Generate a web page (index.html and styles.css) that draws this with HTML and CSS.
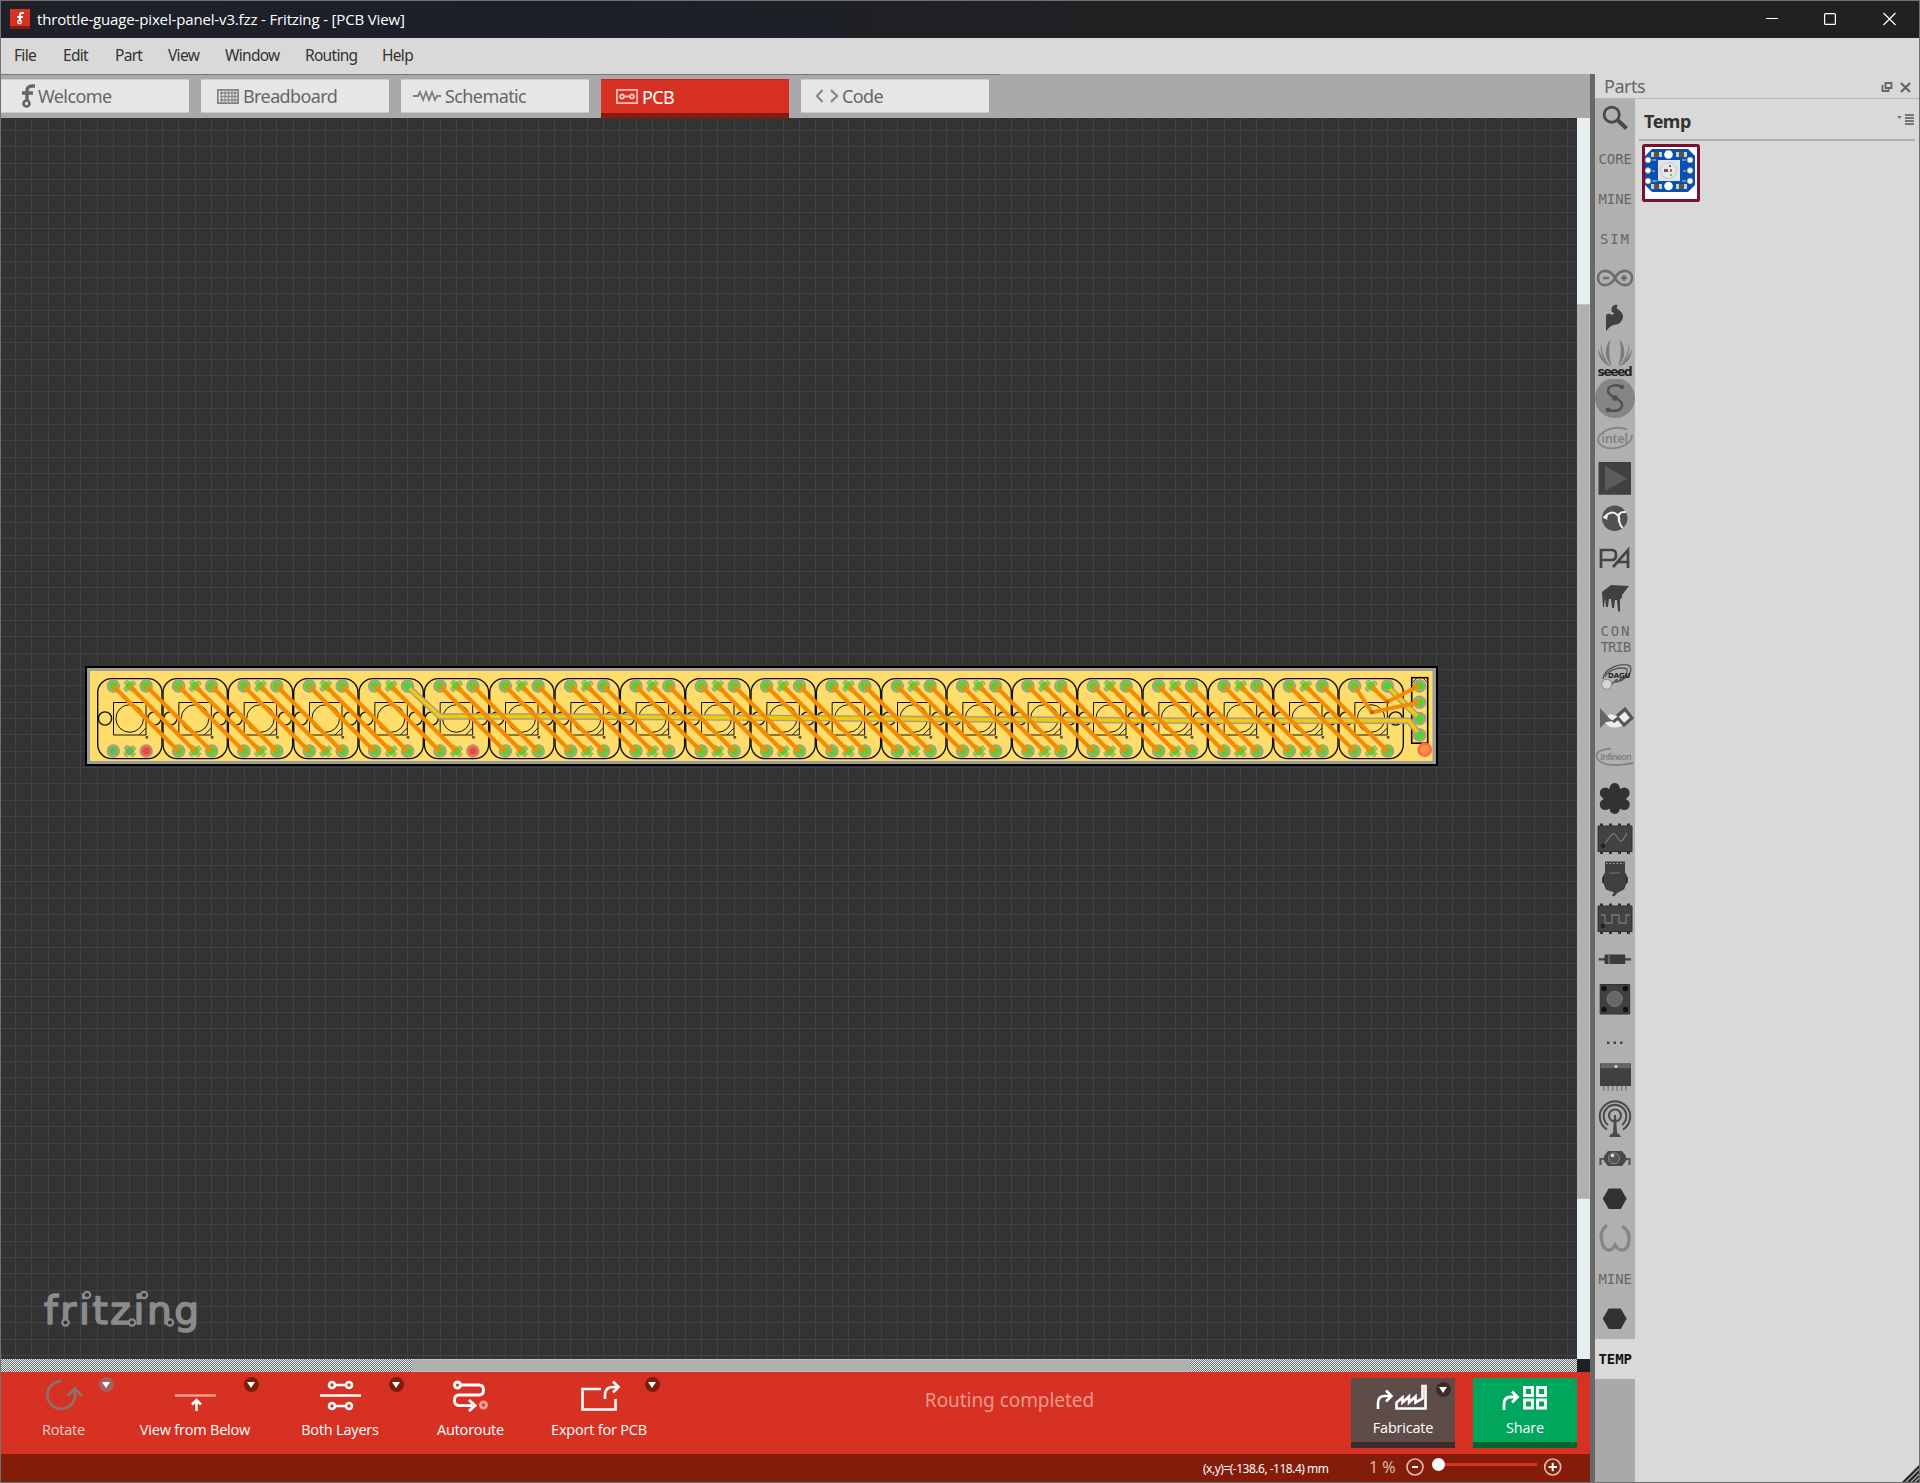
FILE: index.html
```html
<!DOCTYPE html>
<html lang="en">
<head>
<meta charset="utf-8">
<title>throttle-guage-pixel-panel-v3.fzz - Fritzing - [PCB View]</title>
<link rel="stylesheet" href="styles.css">
</head>
<body>
<div class="window">
  <header class="titlebar">
    <svg class="app-icon" width="20" height="20" viewBox="0 0 20 20"><path fill="#d63122" d="M0 0h20v17H0z"/><path fill="#861c0b" d="M0 17h20v3H0z"/><g fill="none" stroke="#fff" stroke-width="2"><path d="M14 4h-2q-2 0-2 2v5M7 8h6"/><circle cx="9.5" cy="13" r="1.7" stroke-width="1.5"/></g></svg>
    <span class="title">throttle-guage-pixel-panel-v3.fzz - Fritzing - [PCB View]</span>
    <svg class="controls" width="132" height="14" viewBox="0 0 132 14" fill="none" stroke="#fff" stroke-width="1.2"><path d="M0 6.5h12M117.500 1l12 12m0-12l-12 12"/><rect x="58.600" y="1.600" width="10.800" height="10.800" rx="1"/></svg>
  </header>
  <nav class="menubar"><span class="m1">File</span><span class="m2">Edit</span><span class="m3">Part</span><span class="m4">View</span><span class="m5">Window</span><span class="m6">Routing</span><span class="m7">Help</span></nav>
  <div class="body">
    <main class="editor">
      <div class="tabs">
        <div class="tab"><svg width="17" height="26" viewBox="0 0 17 26" fill="none" stroke="#666" stroke-width="3.400"><path d="M15 3h-3q-5 0-5 5v9M2 10h11"/><circle cx="6.500" cy="20.500" r="3" stroke-width="2.700"/></svg><span>Welcome</span></div>
        <div class="tab tab-board"><svg width="22" height="15" viewBox="0 0 22 15" fill="none"><path stroke="#808080" stroke-width="1.800" d="M.8.8h20.400v13.400H.8z"/><path stroke="#8a8a8a" stroke-width="1.300" d="M3 4h17M3 7.500h17M3 11h17M4.500 2v11M8 2v11M11.500 2v11M15 2v11M18 2v11"/></svg><span>Breadboard</span></div>
        <div class="tab tab-schem"><svg width="28" height="12" viewBox="0 0 28 12" fill="none" stroke="#808080" stroke-width="1.800"><path d="M0 6h5l2-4 3 8 3-8 3 8 3-8 3 8 2-4h4"/></svg><span>Schematic</span></div>
        <div class="tab tab-pcb"><svg width="22" height="15" viewBox="0 0 22 15" fill="none" stroke="#f8c0ba" stroke-width="1.800"><path d="M.9.9h20.200v13.200H.9zM8 7.500h6"/><circle cx="6" cy="7.500" r="2"/><circle cx="16" cy="7.500" r="2"/></svg><span>PCB</span></div>
        <div class="tab tab-code"><svg width="24" height="14" viewBox="0 0 24 14" fill="none" stroke="#888" stroke-width="2.300"><path d="M7.500 1L2 7l5.500 6M16 1l6 6-6 6"/></svg><span>Code</span></div>
      </div>
      <div class="view">
        <div class="canvas">
          <svg class="board" width="1353" height="100" viewBox="85 666 1353 100">
            <defs>
              <g id="pad"><circle r="5.900" fill="#d0a955" stroke="#9f9b91" stroke-width="1.700"/><circle r="4.800" fill="#8cc43a"/><circle r="3.800" fill="#44d63c"/></g>
              <g id="padmid"><circle r="6" fill="none" stroke="#9f9b91" stroke-width="1.500" stroke-dasharray="5.400 4.025" stroke-dashoffset="-2"/><circle r="5" fill="#a7c244"/><circle r="3.800" fill="#44d63c"/></g>
              <g id="module" fill="none" stroke="#111" stroke-width="1">
                <rect x="97.700" y="678.600" width="64.300" height="80" rx="14" stroke-width="1.400"/>
                <circle cx="105" cy="718.500" r="6.600" stroke-width="1.400"/><circle cx="154.300" cy="718.500" r="6.600" stroke-width="1.400"/>
                <path d="M113.500 702.500h32.500v32.500h-32.500zM139 735l7-7"/><circle cx="129.700" cy="718.500" r="13.800"/><circle cx="146.800" cy="737.300" r="1"/>
              </g>
              <g id="pads" stroke="none"><use href="#pad" x="113.300" y="686"/><use href="#padmid" x="129.700" y="686"/><use href="#pad" x="146.200" y="686"/><use href="#pad" x="113.300" y="751"/><use href="#padmid" x="129.700" y="751"/><use href="#pad" x="146.200" y="751"/></g>
              <path id="tracks" d="M114.500 687.200l63 63M131 687.200l63 63M147.400 687.200l63 63" stroke="#f38c02" stroke-width="4.200" stroke-linecap="round"/>
              <path id="tracks2" d="M114.500 687.200l63 63M131 687.200l63 63" stroke="#f38c02" stroke-width="4.200" stroke-linecap="round"/>
              <g id="m5"><use href="#module"/><use href="#module" x="65.330"/><use href="#module" x="130.670"/><use href="#module" x="196"/><use href="#module" x="261.330"/></g>
              <g id="p5"><use href="#pads"/><use href="#pads" x="65.330"/><use href="#pads" x="130.670"/><use href="#pads" x="196"/><use href="#pads" x="261.330"/></g>
              <g id="t4"><use href="#tracks"/><use href="#tracks" x="65.330"/><use href="#tracks" x="130.670"/><use href="#tracks" x="196"/></g>
            </defs>
            <path d="M85 666h1353v100H85z"/><path fill="#9c9c9c" d="M87 668h1349v96H87z"/><path fill="#fedd6b" d="M90 671h1342.500v90H90z"/>
            <use href="#m5"/><use href="#m5" x="326.670"/><use href="#m5" x="653.330"/><use href="#m5" x="980"/>
            <rect x="1411.700" y="677.700" width="16" height="65.500" fill="none" stroke="#000" stroke-width="1.600"/><path d="M1412 683l5-5m6 0l5 5" stroke="#333"/>
            <use href="#p5"/><use href="#p5" x="326.670"/><use href="#p5" x="653.330"/><use href="#p5" x="980"/>
            <use href="#pad" x="1419.500" y="686"/><use href="#pad" x="1419.500" y="702.300"/><use href="#pad" x="1419.500" y="718.600"/><use href="#pad" x="1419.500" y="735"/>
            <g fill="#62b85a"><circle cx="113.300" cy="751" r="4"/><circle cx="129.700" cy="751" r="4"/></g>
            <g fill="none" stroke-linejoin="round"><path d="M407 686l33 30.500h120l400 2.700 240 1.500h209l10.500 14.300M1387 686l32.500 32.600" stroke="#9f9d91" stroke-width="6.400"/><path d="M407 686l33 30.500h120l400 2.700 240 1.500h209l10.500 14.300M1387 686l32.500 32.600" stroke="#f5c905" stroke-width="3.600"/></g>
            <g fill="#44d63c"><circle cx="407" cy="686" r="3.500"/><circle cx="1387.500" cy="686" r="3.500"/><circle cx="1419.500" cy="718.600" r="3.500"/><circle cx="1419.500" cy="735" r="3.500"/></g>
            <use href="#t4"/><use href="#tracks2" x="261.330"/><use href="#t4" x="326.670"/><use href="#t4" x="588"/><use href="#t4" x="849.330"/><use href="#tracks" x="1110.670"/><use href="#tracks" x="1176"/>
            <path d="M1354.300 686l17.700 26.300 47.500-10M1371 686l16.400 15.800 32-16" fill="none" stroke="#f38c02" stroke-width="4" stroke-linejoin="round"/>
            <g fill="#c05a28"><circle cx="1372" cy="712.300" r="2"/><circle cx="1387.400" cy="702" r="2"/></g>
            <g fill="#df4c49" stroke="#ff6940" stroke-width="1.800"><circle cx="146.200" cy="751" r="4.500"/><circle cx="473" cy="751" r="4.500"/><circle cx="1424.700" cy="749.700" r="6" fill="#ff9248" stroke-width="2.500"/></g>
          </svg>
          <svg class="logo" width="160" height="50" viewBox="0 0 160 50" fill="#8b8b8b"><text x="1" y="37" font-size="39" textLength="155" lengthAdjust="spacing" stroke="#8b8b8b" stroke-width="1.600" stroke-linejoin="round">fritzing</text><g fill="#333" stroke="#8b8b8b" stroke-width="2.200"><circle cx="44" cy="8" r="3.200"/><circle cx="101" cy="8" r="3.200"/><circle cx="22.500" cy="35.500" r="3.200"/><circle cx="89" cy="35.500" r="3.200"/><circle cx="127" cy="35.500" r="3.200"/></g></svg>
        </div>
        <div class="vscroll"><div class="vthumb"></div></div>
      </div>
      <div class="hscroll"><div class="hthumb"></div><div class="corner"></div></div>
      <div class="toolbar">
        <div class="tool t-rotate"><svg width="44" height="34" viewBox="0 0 44 34" fill="none" stroke="#8d716e" stroke-width="2.700"><path d="M19.500 3.200a13.800 13.800 0 1 0 13.500 13.800V11M25.500 18l7.500-7.500 7 7.500"/></svg><span>Rotate</span><i class="drop dim"></i></div>
        <div class="tool t-below"><svg width="44" height="34" viewBox="0 0 44 34" fill="none" stroke="#fff" stroke-width="2.500"><path stroke="#f1a18e" d="M2 17.500h41"/><path d="M23.500 33V22M19 26.500l4.500-4.500 4.500 4.500"/></svg><span>View from Below</span><i class="drop"></i></div>
        <div class="tool t-layers"><svg width="44" height="34" viewBox="0 0 44 34" fill="none" stroke="#fff" stroke-width="2.600"><path d="M2 17.500h41M17 7h11M17 28h11"/><circle cx="14" cy="7" r="3"/><circle cx="31" cy="7" r="3"/><circle cx="14" cy="28" r="3"/><circle cx="31" cy="28" r="3"/></svg><span>Both Layers</span><i class="drop"></i></div>
        <div class="tool t-auto"><svg width="44" height="34" viewBox="0 0 44 34" fill="none" stroke="#fff" stroke-width="2.900"><circle cx="8.500" cy="7" r="3"/><path d="M12 7h18q4.500 0 4.500 5t-4.500 5H10q-4.500 0-4.500 5.300t4.500 5.300h13M20 22l6 5.600-6 5.400"/><circle cx="34.500" cy="27" r="3" stroke="#f1a18e"/></svg><span>Autoroute</span></div>
        <div class="tool t-export"><svg width="44" height="34" viewBox="0 0 44 34" fill="none" stroke="#fff" stroke-width="2.600"><path d="M24 11H5.500v20.500h33V21M28 21v-4q0-8 8-8h5M36 3.500L41.500 9 36 14.500"/></svg><span>Export for PCB</span><i class="drop"></i></div>
        <div class="message">Routing completed</div>
        <div class="action fabricate"><svg width="54" height="27" viewBox="0 0 54 27" fill="none" stroke="#fff" stroke-width="2.600"><path d="M2 25v-6q0-7 7-7h6M10 6.500l5.500 5.500-5.500 5.500M20.500 24.500v-6l6-5v5l6.500-6v6l6.500-6v6l7-4V2h3v22.500z"/></svg><span>Fabricate</span><i class="drop dark"></i></div>
        <div class="action share"><svg width="46" height="27" viewBox="0 0 46 27" fill="none" stroke="#fff" stroke-width="2.800"><path d="M2 26v-6q0-7 7-7h6M10 7.500l5.500 5.500-5.500 5.500M22.500 3.500h8v8h-8zM35.500 3.500h8v8h-8zM22.500 16h8v8h-8zM35.500 16h8v8h-8z"/></svg><span>Share</span></div>
      </div>
      <div class="status"><span class="coords">(x,y)=(-138.6, -118.4) mm</span><span class="zoom">1 %</span>
        <svg class="slider" width="160" height="20" viewBox="0 0 160 20" fill="none" stroke="#e0b5aa" stroke-width="1.700"><circle cx="10" cy="11" r="8"/><circle cx="147.700" cy="11" r="8"/><path stroke="#fff" stroke-width="2" d="M7 11h6M143.500 11h8.400M147.700 6.800v8.400"/><path stroke="#d73222" stroke-width="3" d="M33 8.500h99"/><circle cx="33.500" cy="8.500" r="6.500" fill="#fff" stroke="none"/></svg>
      </div>
    </main>
    <div class="splitter"></div>
    <aside class="parts">
      <div class="parts-head"><span>Parts</span><svg width="32" height="14" viewBox="0 0 32 14" fill="none" stroke="#666" stroke-width="2.300"><path d="M4.500 2h6v5h-6zM2.500 5H1.500v5h6V8" stroke-width="1.800"/><path d="M20 2l9 9m0-9l-9 9"/></svg></div>
      <div class="parts-body">
        <div class="bins">
          <svg viewBox="0 0 40 40"><g fill="none" stroke="#484848"><circle cx="16.700" cy="15.700" r="7.600" stroke-width="2.700"/><path d="M23 21.500l8.500 8" stroke-width="4"/></g></svg>
          <svg viewBox="0 0 40 40"><text x="3.500" y="25">CORE</text></svg>
          <svg viewBox="0 0 40 40"><text x="3.500" y="25">MINE</text></svg>
          <svg viewBox="0 0 40 40"><text class="sim" x="5" y="25">SIM</text></svg>
          <svg viewBox="0 0 40 40" fill="none" stroke="#6d6d6d" stroke-width="2.600"><path d="M20 19c-5-10-17-9-17 0s12 10 17 0 17-9 17 0-12 10-17 0M8 19h6M26 19h6M29 16v6"/></svg>
          <svg viewBox="0 0 40 40"><path fill="#404040" d="M11 32V18q0-4 4-3 4 2 4-1-4-1-2-6 2-3 6-2-3 3 1 5 4 3 4 7-1 7-9 8-3 0-8 6z"/></svg>
          <svg viewBox="0 0 40 40" fill="#7b7b7b"><path d="M15.500 0q-10 14 1 27-4-14-1-27M24.500 0q10 14-1 27 4-14 1-27M3 10q1 14 13.500 17.500Q7 20 3 10M37 10q-1 14-13.500 17.500Q33 20 37 10M6 3Q4 17 13 24 6 14 6 3M34 3q2 14-7 21 7-10 7-21"/><text class="seeed" x="2.500" y="37" textLength="35">seeed</text></svg>
          <svg viewBox="0 0 40 40"><circle cx="20" cy="19" r="20" fill="#858585"/><path fill="none" stroke="#505050" stroke-width="2.500" d="M27 8c-5-3-14-2-14 4s13 7 14 13-6 8-14 6"/><circle cx="27" cy="8" r="2.200" fill="#505050"/><circle cx="20" cy="19" r="2.800" fill="#505050"/><circle cx="13" cy="31" r="2.400" fill="#505050"/></svg>
          <svg viewBox="0 0 40 40"><ellipse cx="20" cy="19" rx="17" ry="10" fill="none" stroke="#858585" stroke-width="1.900" stroke-dasharray="78 8" transform="rotate(-10 20 19)"/><text class="brand intel" x="6.500" y="24">intel</text></svg>
          <svg viewBox="0 0 40 40"><path fill="#404040" d="M3.500 3h32.500v32.700H3.500z"/><path fill="#5c5c5c" d="M10 7l22 12.500L10 32z"/></svg>
          <svg viewBox="0 0 40 40"><circle cx="19.700" cy="19.300" r="12.700" fill="#515151"/><path fill="none" stroke="#eee" stroke-width="2" d="M8.500 19q8-9 14-3 3 3 1 7M31 13q-9-1-7 8 1 6 4 8"/><path fill="#eee" d="M8 18l5-2-1 5z"/></svg>
          <svg viewBox="0 0 40 40" fill="none" stroke="#444" stroke-width="2.700"><path d="M6 29V11h11q4 0 4 5t-4 5H6M18 28l15-17v18M22 23h11"/></svg>
          <svg viewBox="0 0 40 40"><path fill="#404040" d="M7 13l9-7 18 1-7 9v3l-2 1v13l-2-1-1-11h-2l-1 8h-2l-1-9h-2l-1 8h-2l-1-9-1 9h-1z"/></svg>
          <svg viewBox="0 0 40 40"><text class="sim" x="5.500" y="17">CON</text><text class="trib" x="5.500" y="33">TRIB</text></svg>
          <svg viewBox="0 0 40 40"><g fill="none" stroke="#555" stroke-width="1.400"><path d="M8 20C9 9 27 3 35 7c4 8-8 15-14 16l1-3-6 6"/><path d="M10 18c4-9 17-10 22-8 1 5-3 9-8 11"/></g><circle cx="11.700" cy="25.300" r="5" fill="#d3d3d3" stroke="#888"/><text class="dagu" x="13" y="18.500">DAGU</text></svg>
          <svg viewBox="0 0 40 40"><path fill="#eee" d="M8 20l7-5 9 3 6-5 5 6-6 7q-11 5-17 0z"/><path fill="#666" d="M5 29V9l10 11 4 2-8 1z"/><path fill="none" stroke="#555" stroke-width="3" d="M22 17l8-7 7 9-8 7-6-7-5 4"/></svg>
          <svg viewBox="0 0 40 40"><path fill="none" stroke="#858585" stroke-width="1.900" d="M16 9.500Q0 11 1.500 18q5 12 36.500 6"/><text class="brand infineon" x="5" y="21">Infineon</text></svg>
          <svg viewBox="0 0 40 40" fill="#323232"><circle cx="19.700" cy="19.700" r="11.500"/><circle cx="19.700" cy="9" r="5"/><circle cx="19.700" cy="30" r="5"/><circle cx="10.300" cy="14" r="5.500"/><circle cx="29.200" cy="14" r="5.500"/><circle cx="10.300" cy="25.500" r="5.500"/><circle cx="29.200" cy="25.500" r="5.500"/></svg>
          <svg viewBox="0 0 40 40"><path stroke="#333" stroke-width="3" stroke-dasharray="3 6" d="M5 6h30M5 33.500h30"/><path fill="#424242" stroke="#333" d="M3 7h34v25.500H3z"/><circle cx="8" cy="27" r="2.200" fill="#222"/><path fill="none" stroke="#777" stroke-width="1.300" d="M10 24c7-8 8-13 12-6s5 5 10-4"/></svg>
          <svg viewBox="0 0 40 40"><path fill="#3f3f3f" d="M10 2.500h20v11l2 3v7l-3 7-6 3-4 4-2-1 2-3-8-3-3-7v-7l2-3z"/><path stroke="#aaa" stroke-dasharray="1.500 2" d="M11 4.500h18"/><path stroke="#777" d="M14 14h11"/><path stroke="#222" stroke-width="1.500" d="M8 18v6m24-6v6"/></svg>
          <svg viewBox="0 0 40 40"><path stroke="#333" stroke-width="3" stroke-dasharray="3 6" d="M5 6h30M5 33.500h30"/><path fill="#424242" stroke="#333" d="M3 7h34v25.500H3z"/><circle cx="8" cy="27" r="2.200" fill="#222"/><path fill="none" stroke="#777" stroke-width="1.300" d="M6 16h4v8h7v-8h7v8h7v-8h4"/></svg>
          <svg viewBox="0 0 40 40"><path stroke="#444" stroke-width="2.200" d="M3.700 20.300H36"/><rect x="9.500" y="15.600" width="20.800" height="9.400" rx="1" fill="#3b3b3b"/><path stroke="#777" stroke-width="1.500" d="M14 16v9"/></svg>
          <svg viewBox="0 0 40 40"><path fill="#404040" stroke="#333" d="M5.200 5.500h29.500v29.500H5.200z"/><circle cx="19.700" cy="20" r="7.600" fill="#686868" stroke="#777"/><g fill="#111"><circle cx="9" cy="9.500" r="2.700"/><circle cx="30.500" cy="9.500" r="2.700"/><circle cx="9" cy="30.500" r="2.700"/><circle cx="30.500" cy="30.500" r="2.700"/></g></svg>
          <svg viewBox="0 0 40 40" fill="#444"><path d="M12 22.500h2.500V25H12zM18.500 22.500H21V25h-2.500zM25 22.500h2.500V25H25z"/></svg>
          <svg viewBox="0 0 40 40"><path stroke="#777" stroke-dasharray="1.300 3.200" stroke-width="6" d="M8 29h25"/><path fill="#404040" d="M5 4.500h31v22.500H5z"/><path fill="#666" d="M6 4.300h29l1 5H5z"/><circle cx="21" cy="7.500" r="1.500" fill="#ddd"/></svg>
          <svg viewBox="0 0 40 40" fill="none" stroke="#4b4b4b" stroke-width="2.100"><circle cx="20" cy="16.500" r="6"/><path d="M13 26a11.300 11.300 0 1 1 14 0M12 30.500a15.200 15.200 0 1 1 16 0"/><path fill="#4b4b4b" stroke="none" d="M19 16h2l1 18q3 1 4 4H14q1-3 4-4z"/></svg>
          <svg viewBox="0 0 40 40"><path fill="none" stroke="#555" stroke-width="2.200" d="M5.500 26v-6h6m23 6v-6h-6"/><path fill="#484848" d="M13 12h14l4 5v5l-4 5H13l-4-5v-5z"/><circle cx="19" cy="19.300" r="5.500" fill="#555" stroke="#888"/><circle cx="17.500" cy="16.500" r="1.800" fill="#ddd"/></svg>
          <svg viewBox="0 0 40 40"><path fill="#323232" d="M7.700 19.700l6-10.300h12l6 10.300-6 10.300h-12z"/></svg>
          <svg viewBox="0 0 40 40"><path fill="none" stroke="#858585" stroke-width="3.300" stroke-linecap="round" d="M11 7Q5 12 6.500 21 8 31 14 31q4 0 6-5 3 5 7 5 6 0 7-9 1-10-6-14"/></svg>
          <svg viewBox="0 0 40 40"><text x="3.500" y="25">MINE</text></svg>
          <svg viewBox="0 0 40 40"><path fill="#323232" d="M7.700 19.700l6-10.300h12l6 10.300-6 10.300h-12z"/></svg>
          <svg class="selected" viewBox="0 0 40 40"><text x="3.500" y="25">TEMP</text></svg>
        </div>
        <div class="bin">
          <div class="bin-head"><span>Temp</span><svg width="18" height="12" viewBox="0 0 18 12"><path fill="#777" d="M0 3h5L2.500 6z"/><path stroke="#777" stroke-width="1.800" d="M8 2h9M8 5h9M8 8h9M8 11h9"/></svg></div>
          <svg class="part" width="58" height="58" viewBox="0 0 58 58"><rect x="1.500" y="1.500" width="55" height="55" rx="1" fill="#fff" stroke="#7a0f35" stroke-width="3"/><path fill="#0750b4" d="M10 5h36l7 7v29l-7 7H10l-7-7V12z"/><g fill="#fff"><circle cx="26.500" cy="10.500" r="4.300"/><circle cx="26.500" cy="42" r="4.300"/><path fill="#e2e4e8" d="M16 16h22v21H16z"/></g><g fill="#fff" stroke="#c5b98d"><circle cx="6" cy="16" r="2.700"/><circle cx="6" cy="26.500" r="2.700"/><circle cx="6" cy="37" r="2.700"/><circle cx="48" cy="16" r="2.700"/><circle cx="48" cy="26.500" r="2.700"/><circle cx="48" cy="37" r="2.700"/></g><g fill="#d8ccac"><path d="M9 8h11v5H9zM34 8h11v5H34zM9 40h11v5H9zM34 40h11v5H34z"/></g><path fill="#555" d="M12 8h5v5h-5zM37 8h5v5h-5zM12 40h5v5h-5zM37 40h5v5h-5z"/><circle cx="26.500" cy="26.500" r="8" fill="#e8e6e6" stroke="#c8c8c8"/><path fill="#755" d="M22 25h4v3h-4z"/><path fill="#d55" d="M28 25h2v3h-2z"/><path fill="#4d6" d="M28 30h2v2h-2z"/><path fill="#55e" d="M27 21h2v2h-2z"/><path stroke="#bcd0ee" d="M10 16h4M10 27h3M10 37h5M40 16h4M41 27h3M40 37h4"/></svg>
        </div>
      </div>
      <svg class="grip" width="17" height="17" viewBox="0 0 17 17"><path fill="#262626" d="M0 17L17 0v17z"/><path stroke="#aaa" stroke-width="1.300" d="M4 17L17 4M9 17l8-8M13 17l4-4"/></svg>
    </aside>
  </div>
</div>
</body>
</html>
```
FILE: styles.css
```css
* { box-sizing: border-box; }
body { margin: 0; font-family: "Noto Sans", "Open Sans", sans-serif; background: #d9d9d9; }
svg { display: block; flex: none; }
.window { width: 1920px; height: 1483px; border: 1px solid #70706f; display: flex; flex-direction: column; overflow: hidden; background: #d9d9d9; }
.titlebar { height: 37px; flex: none; display: flex; align-items: center; padding: 0 21px 1px 9px; background: linear-gradient(90deg, #1e2128, #1c1f2a 30%, #202122 60%); color: #fff; }
.title { margin-left: 7px; font-family: "Open Sans", sans-serif; font-size: 15px; letter-spacing: -.15px; white-space: nowrap; }
.controls { margin-left: auto; }
.menubar { height: 36px; flex: none; display: flex; align-items: center; padding-left: 13px; padding-bottom: 2px; font-size: 15.500px; letter-spacing: -.7px; color: #333; line-height: 34px; }
.m1 { width: 49px; } .m2 { width: 52px; } .m3 { width: 53px; } .m4 { width: 57px; } .m5 { width: 80px; } .m6 { width: 77px; }
.body { flex: 1; min-height: 0; display: flex; }
.editor { width: 1589px; flex: none; display: flex; flex-direction: column; }
.tabs { height: 44px; flex: none; display: flex; gap: 12px; padding-top: 5px; background: linear-gradient(#777, #777) 0 0 / 999px 1px no-repeat #a9a9a9; }
.tab { width: 188px; height: 34px; display: flex; align-items: center; padding-left: 19px; background: #e6e6e6; border-top: 1px solid #ccc; border-bottom: 1px solid #ccc; color: #666; font-size: 18px; letter-spacing: -.6px; }
.tab svg { margin-right: 1px; }
.tab-board { padding-left: 16px; } .tab-board svg { margin-right: 4px; }
.tab-schem { padding-left: 12px; } .tab-schem svg { margin-right: 4px; }
.tab-pcb { height: 39px; padding-left: 15px; background: #d63122; border-top: 1px solid #c4291c; border-bottom: 5px solid #861c0b; color: #fff; } .tab-pcb svg { margin-right: 4px; }
.tab-code { padding-left: 14px; } .tab-code svg { margin-right: 3px; }
.view { height: 1241px; flex: none; display: flex; }
.canvas { width: 1576px; display: flex; flex-direction: column; padding-top: 548px; background-color: #333;
  background-image: linear-gradient(90deg, #3b434b 1px, transparent 1px 16px, #404244 16px 17px, transparent 17px 33px, #3d4247 33px 34px, transparent 34px), linear-gradient(#3b434b 1px, transparent 1px 16px, #404244 16px 17px, transparent 17px 33px, #3d4247 33px 34px, transparent 34px);
  background-size: 49px 49px; background-position: 14px 12px; }
.board { margin-left: 84px; }
.logo { margin: 521px 0 0 42px; font-family: "DejaVu Sans", sans-serif; }
.vscroll { width: 13px; padding-top: 186px; background: #e6eef2; }
.vthumb { height: 895px; background: #b0b0b0; border: 1px solid #c2c2c2; border-width: 1px 1px 1px 0; }
.hscroll { height: 13px; flex: none; display: flex; padding-left: 411px; background: conic-gradient(#6e7375 25%, #e6eef2 0 50%, #6e7375 0 75%, #e6eef2 0) 0 0 / 2px 2px; }
.hthumb { width: 778px; background: #b0b0b0; border-top: 1px solid #c2c2c2; border-bottom: 1px solid #bdbdbd; }
.corner { width: 13px; margin-left: auto; background: #202020; }
.toolbar { height: 82px; flex: none; display: flex; background: #d63122; color: #fff; font-family: "Open Sans", sans-serif; font-size: 14.500px; letter-spacing: -.2px; }
.tool { position: relative; display: flex; flex-direction: column; align-items: center; padding-top: 6px; white-space: nowrap; }
.tool span { margin-top: 7px; line-height: 22px; }
.t-rotate { width: 125px; color: #f6cfcb; } .t-below { width: 138px; } .t-layers { width: 152px; } .t-auto { width: 109px; } .t-export { width: 148px; }
.drop { position: absolute; left: calc(50% + 49px); top: 5px; width: 15px; height: 15px; border-radius: 50%; background: #7d1c0a; }
.drop::after { content: ""; position: absolute; left: 3px; top: 5px; border: 4.500px solid transparent; border-top: 6px solid #fff; border-bottom: 0; }
.drop.dim { background: #a55f5d; left: calc(50% + 35px); }
.t-export .drop { left: calc(50% + 46px); }
.message { width: 673px; padding-top: 15px; text-align: center; color: #f0988c; font-family: "Noto Sans", sans-serif; font-size: 19px; line-height: 26px; letter-spacing: -.05px; }
.action { position: relative; height: 70px; margin-top: 6px; width: 104px; display: flex; flex-direction: column; align-items: center; padding-top: 6px; font-size: 14.500px; border-bottom: 6px solid; }
.action span { margin-top: 6px; line-height: 22px; }
.fabricate { margin-left: 5px; background: #5d4c48; border-color: #3b2c29; }
.share { margin-left: 18px; background: #00a65b; border-color: #00642f; }
.drop.dark { left: 85px; top: 4px; background: #3b2c29; }
.status { height: 28px; flex: none; display: flex; align-items: center; background: #831c08; color: #fff; }
.coords { width: 166px; margin-left: 1202px; font-size: 12px; letter-spacing: -.5px; white-space: nowrap; }
.zoom { width: 36px; font-size: 16px; letter-spacing: -.5px; word-spacing: 1px; color: #dfb9b0; white-space: nowrap; line-height: 20px; padding-bottom: 2px; }
.slider { margin-bottom: 4px; }
.splitter { width: 5px; flex: none; background: #686868; }
.parts { position: relative; flex: 1; display: flex; flex-direction: column; }
.parts-head { height: 25px; flex: none; display: flex; align-items: center; justify-content: space-between; padding: 0 6px 0 9px; border-bottom: 1px solid #b8b8b8; color: #666; font-size: 18px; line-height: 24px; letter-spacing: -.5px; }
.parts-head svg { margin-top: 4px; }
.parts-body { flex: 1; min-height: 0; display: flex; }
.bins { width: 40px; background: linear-gradient(#b0b0b0 1280px, #a9a9a9 0); }
.bins svg { width: 40px; height: 40px; }
.bins text { font-family: "DejaVu Sans Mono", monospace; font-size: 14px; letter-spacing: -.1px; fill: #666; }
.bins .sim { letter-spacing: 1.800px; }
.bins .trib { letter-spacing: -1px; }
.bins .brand { font-family: "Noto Sans", sans-serif; font-weight: 600; fill: #808080; letter-spacing: 0; }
.bins .intel { font-size: 12px; }
.bins .infineon { font-size: 9px; letter-spacing: -.8px; }
.bins .seeed { font: bold 12px "DejaVu Sans", sans-serif; fill: #222; }
.bins .dagu { font: bold 7px "DejaVu Sans", sans-serif; fill: #222; }
.bins .selected { background: #d9d9d9; }
.bins .selected text { font-weight: bold; fill: #111; }
.bin { flex: 1; padding: 0 4px 0 4px; }
.bin-head { height: 42px; display: flex; align-items: center; justify-content: space-between; padding: 0 0 1px 5px; border-bottom: 2px solid #b0b0b0; color: #333; font-size: 18px; font-weight: bold; letter-spacing: -.5px; line-height: 36px; }
.bin-head span { padding-top: 4px; }
.part { margin: 3px 0 0 3px; }
.grip { position: absolute; right: 0; bottom: 0; }
```
